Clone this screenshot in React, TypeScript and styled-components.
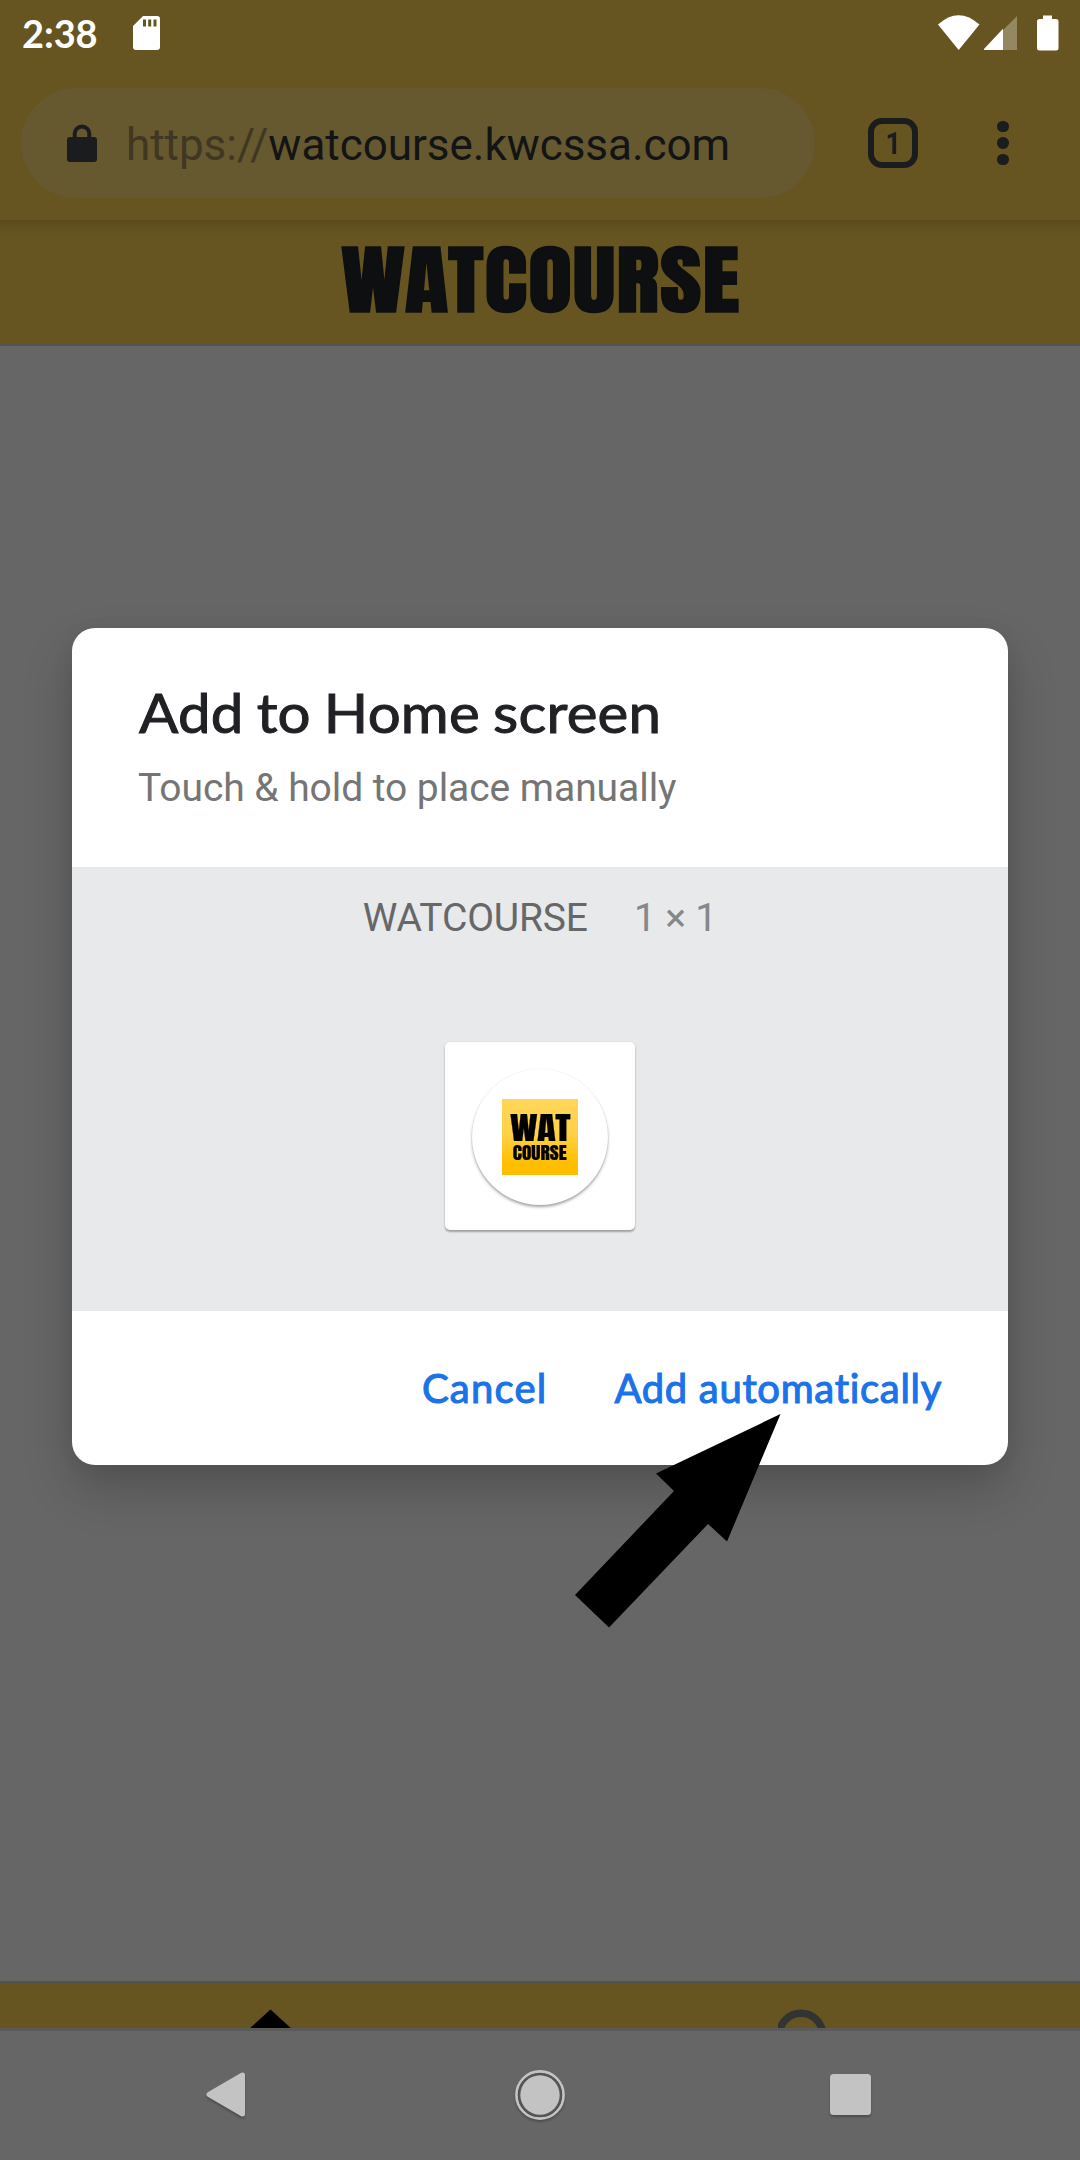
import React from "react";
import styled, { createGlobalStyle } from "styled-components";

const GOLD = "#665520";
const SCRIMMED = "#666666";
const INK = "#1b1c1e";

const GlobalStyle = createGlobalStyle`
  * { box-sizing: border-box; }
  body { margin: 0; background: ${SCRIMMED}; }
  button { border: 0; background: none; padding: 0; }
`;

const Screen = styled.div`
  position: relative;
  display: flex;
  flex-direction: column;
  width: 1080px;
  height: 2160px;
  overflow: hidden;
  background: ${SCRIMMED};
  font-family: Roboto, "Liberation Sans", sans-serif;
`;

const StatusBar = styled.div`
  display: flex;
  align-items: flex-start;
  height: 66px;
  padding: 15px 21px 0 22px;
  background: ${GOLD};
`;

const Clock = styled.span`
  width: 109.500px;
  margin-top: -5px;
  font: 700 38px/46px Lato, sans-serif;
  letter-spacing: -0.1px;
  color: #fff;
`;

const StatusIcons = styled.div`
  display: flex;
  align-items: flex-start;
  margin-left: auto;
`;

const BrowserBar = styled.div`
  display: flex;
  align-items: center;
  height: 154px;
  padding: 0 0 0 21px;
  background: ${GOLD};
`;

const AddressPill = styled.div`
  display: flex;
  align-items: center;
  width: 794px;
  height: 110px;
  padding-left: 46px;
  border-radius: 55px;
  background: #66582f;
`;

const Url = styled.span`
  margin: 4px 0 0 29px;
  font-size: 44px;
  line-height: 52px;
  letter-spacing: -0.03px;
  white-space: nowrap;
  color: #131416;
`;

const Scheme = styled.span`
  color: #3f3722;
`;

const TabCount = styled.div`
  display: flex;
  align-items: center;
  justify-content: center;
  width: 50px;
  height: 50px;
  margin-left: 53px;
  border: 6px solid ${INK};
  border-radius: 14px;
`;

const TabDigit = styled.span`
  font-size: 32px;
  font-weight: 700;
  line-height: 38px;
  color: ${INK};
  transform: scaleX(0.85);
`;

const MenuDots = styled.div`
  display: flex;
  flex-direction: column;
  gap: 5px;
  margin-left: 79px;
`;

const Dot = styled.i`
  width: 11.500px;
  height: 11.500px;
  border-radius: 50%;
  background: ${INK};
`;

const SiteHeader = styled.header`
  display: flex;
  justify-content: center;
  height: 126px;
  border-bottom: 3px solid #535353;
  background: linear-gradient(#5b4b1c 0, #5f4f1e 5px, ${GOLD} 16px);
`;

const SiteLogo = styled.h1`
  margin: 1px 0 0 2px;
  font: 400 75px/120px Impact, Anton, sans-serif;
  letter-spacing: 0.8px;
  color: #0e0f10;
  -webkit-text-stroke: 1.4px #0e0f10;
  transform: scaleX(1.198);
`;

const PageBody = styled.main`
  flex: 1;
`;

const TabBar = styled.nav`
  display: flex;
  height: 50px;
  border-top: 3px solid #535353;
  border-bottom: 3px solid #5a5a5a;
  background: ${GOLD};
`;

const TabSlot = styled.div<{ $inset: number }>`
  flex: 1;
  height: 44px;
  padding: 25px 0 0 ${(p) => p.$inset}px;
  overflow: hidden;
`;

const SystemNav = styled.div`
  display: flex;
  align-items: center;
  height: 129px;
  padding: 0 209px 2px 206px;
  filter: drop-shadow(0 2px 1px rgba(0, 0, 0, 0.25));
`;

const NavButton = styled.div<{ $before?: number }>`
  display: flex;
  margin-left: ${(p) => p.$before ?? 0}px;
`;

const Dialog = styled.section`
  position: absolute;
  left: 72px;
  top: 628px;
  width: 936px;
  border-radius: 23px;
  overflow: hidden;
  background: #fff;
  box-shadow: 0 24px 50px rgba(0, 0, 0, 0.2), 0 4px 20px rgba(0, 0, 0, 0.06);
`;

const DialogHead = styled.div`
  height: 239px;
  padding: 51px 67px 0 66px;
`;

const Title = styled.h2`
  margin: 0 0 0 1px;
  font: 400 55px/66px Lato, sans-serif;
  letter-spacing: 0.2px;
  word-spacing: -2px;
  color: #202124;
  -webkit-text-stroke: 1px #202124;
  transform: scaleX(1.059);
  transform-origin: left;
`;

const Subtitle = styled.p`
  margin: 20px 0 0;
  font-size: 39px;
  line-height: 46px;
  letter-spacing: -0.06px;
  color: #757575;
`;

const Preview = styled.div`
  display: flex;
  flex-direction: column;
  align-items: center;
  height: 444px;
  padding-top: 28px;
  background: #e8e9eb;
`;

const Caption = styled.div`
  display: flex;
  gap: 46px;
  font-size: 39px;
  line-height: 46px;
  letter-spacing: -0.15px;
  color: #666769;
`;

const Span = styled.span`
  color: #86878a;
`;

const Tile = styled.div`
  display: flex;
  align-items: center;
  justify-content: center;
  width: 190px;
  height: 188px;
  margin-top: 101px;
  padding-top: 2px;
  border-radius: 5px;
  background: #fff;
  box-shadow: 0 2px 2px rgba(0, 0, 0, 0.3), 0 0 2px rgba(0, 0, 0, 0.08);
`;

const IconDisc = styled.div`
  display: flex;
  align-items: center;
  justify-content: center;
  width: 136px;
  height: 136px;
  border-radius: 50%;
  background: #fff;
  box-shadow: 0 2px 3px rgba(0, 0, 0, 0.36), 0 0 1px rgba(0, 0, 0, 0.06);
`;

const AppIcon = styled.div`
  display: flex;
  flex-direction: column;
  align-items: center;
  width: 76px;
  height: 76px;
  padding-top: 13px;
  background: linear-gradient(#ffd65a 0, #ffd147 45%, #ffbf00 85%);
  color: #000;
`;

const IconWord = styled.span<{ $size: number; $line: number; $stretch: number }>`
  font: 400 ${(p) => p.$size}px/${(p) => p.$line}px Impact, Anton, sans-serif;
  -webkit-text-stroke: 0.2px #000;
  transform: scaleX(${(p) => p.$stretch});
`;

const DialogActions = styled.div`
  display: flex;
  align-items: center;
  justify-content: flex-end;
  gap: 67px;
  height: 154px;
  padding: 0 66px 0 0;
`;

const ActionButton = styled.button<{ $tracking: number }>`
  font: 400 40px/48px Lato, sans-serif;
  font-variant-ligatures: none;
  letter-spacing: ${(p) => p.$tracking}px;
  color: #1a73e8;
  -webkit-text-stroke: 1.1px #1a73e8;
  white-space: nowrap;
`;

const Pointer = styled.svg`
  position: absolute;
  left: 574px;
  top: 1413px;
`;

export default function App() {
  return (
    <Screen>
      <GlobalStyle />
      <StatusBar>
        <Clock>2:38</Clock>
        <svg width="29" height="36" viewBox="0 0 29 36">
          <path
            fillRule="evenodd"
            fill="#fff"
            d="M11 1H25a3 3 0 0 1 3 3V32a3 3 0 0 1-3 3H4a3 3 0 0 1-3-3V11ZM11 4.500V11.500H14V4.500ZM16.200 4.500V11.500H19.200V4.500ZM21.500 4.500V11.500H24.500V4.500Z"
          />
        </svg>
        <StatusIcons>
          <svg width="121" height="36" viewBox="0 0 121 36" fill="#fff">
            <path d="M0 9.500Q20.500-9 41.500 9.500L20.700 35Z" />
            <path d="M79 1V35H45.500Z" fillOpacity="0.3" />
            <path d="M65 13.800V35H46V34Z" />
            <path d="M105 0.500H114V4H118a2.500 2.500 0 0 1 2.500 2.500V33a2.500 2.500 0 0 1-2.500 2.500H101.500a2.500 2.500 0 0 1-2.500-2.500V6.500A2.500 2.500 0 0 1 101.500 4H105Z" />
          </svg>
        </StatusIcons>
      </StatusBar>

      <BrowserBar>
        <AddressPill>
          <svg width="30" height="38" viewBox="0 0 30 38">
            <rect x="0" y="13" width="30" height="25" rx="3" fill={INK} />
            <path d="M7.700 14V9.800a7.300 7.300 0 0 1 14.600 0V14" fill="none" stroke={INK} strokeWidth="4" />
          </svg>
          <Url>
            <Scheme>https://</Scheme>watcourse.kwcssa.com
          </Url>
        </AddressPill>
        <TabCount>
          <TabDigit>1</TabDigit>
        </TabCount>
        <MenuDots>
          <Dot />
          <Dot />
          <Dot />
        </MenuDots>
      </BrowserBar>

      <SiteHeader>
        <SiteLogo>WATCOURSE</SiteLogo>
      </SiteHeader>

      <PageBody />

      <TabBar>
        <TabSlot $inset={240}>
          <svg width="60" height="50" viewBox="0 0 60 50">
            <path d="M30.500 0.500L53 21V50H8V21Z" fill="#000" />
          </svg>
        </TabSlot>
        <TabSlot $inset={235}>
          <svg width="52" height="60" viewBox="0 0 52 60">
            <circle cx="26" cy="26" r="21.700" transform="translate(-3 0)" fill="none" stroke="#333" strokeWidth="7.500" overflow="visible" />
          </svg>
        </TabSlot>
      </TabBar>

      <SystemNav>
        <NavButton>
          <svg width="39" height="45" viewBox="0 0 39 45">
            <path d="M3 22.500L36.500 3V42Z" fill="#c3c3c3" stroke="#c3c3c3" strokeWidth="5" strokeLinejoin="round" />
          </svg>
        </NavButton>
        <NavButton $before={270}>
          <svg width="50" height="50" viewBox="0 0 50 50">
            <circle cx="25" cy="25" r="23.500" fill="none" stroke="#c3c3c3" strokeWidth="2.800" />
            <circle cx="25" cy="25" r="21" fill="none" stroke="#555" strokeWidth="2.500" />
            <circle cx="25" cy="25" r="19.700" fill="#c3c3c3" />
          </svg>
        </NavButton>
        <NavButton $before={265}>
          <svg width="41" height="41" viewBox="0 0 41 41">
            <rect width="41" height="41" rx="3.500" fill="#c3c3c3" />
          </svg>
        </NavButton>
      </SystemNav>

      <Dialog>
        <DialogHead>
          <Title>Add to Home screen</Title>
          <Subtitle>Touch &amp; hold to place manually</Subtitle>
        </DialogHead>
        <Preview>
          <Caption>
            <span>WATCOURSE</span>
            <Span>1 × 1</Span>
          </Caption>
          <Tile>
            <IconDisc>
              <AppIcon>
                <IconWord $size={31} $line={32} $stretch={1.25}>WAT</IconWord>
                <IconWord $size={17} $line={18} $stretch={1.14}>COURSE</IconWord>
              </AppIcon>
            </IconDisc>
          </Tile>
        </Preview>
        <DialogActions>
          <ActionButton $tracking={1.2}>Cancel</ActionButton>
          <ActionButton $tracking={0.7}>Add automatically</ActionButton>
        </DialogActions>
      </Dialog>

      <Pointer width="210" height="216" viewBox="0 0 210 216">
        <path d="M206.500 1L82 60.500L100 78L1 182L35 214.500L134 111L153 128.500Z" fill="#000" />
      </Pointer>
    </Screen>
  );
}
